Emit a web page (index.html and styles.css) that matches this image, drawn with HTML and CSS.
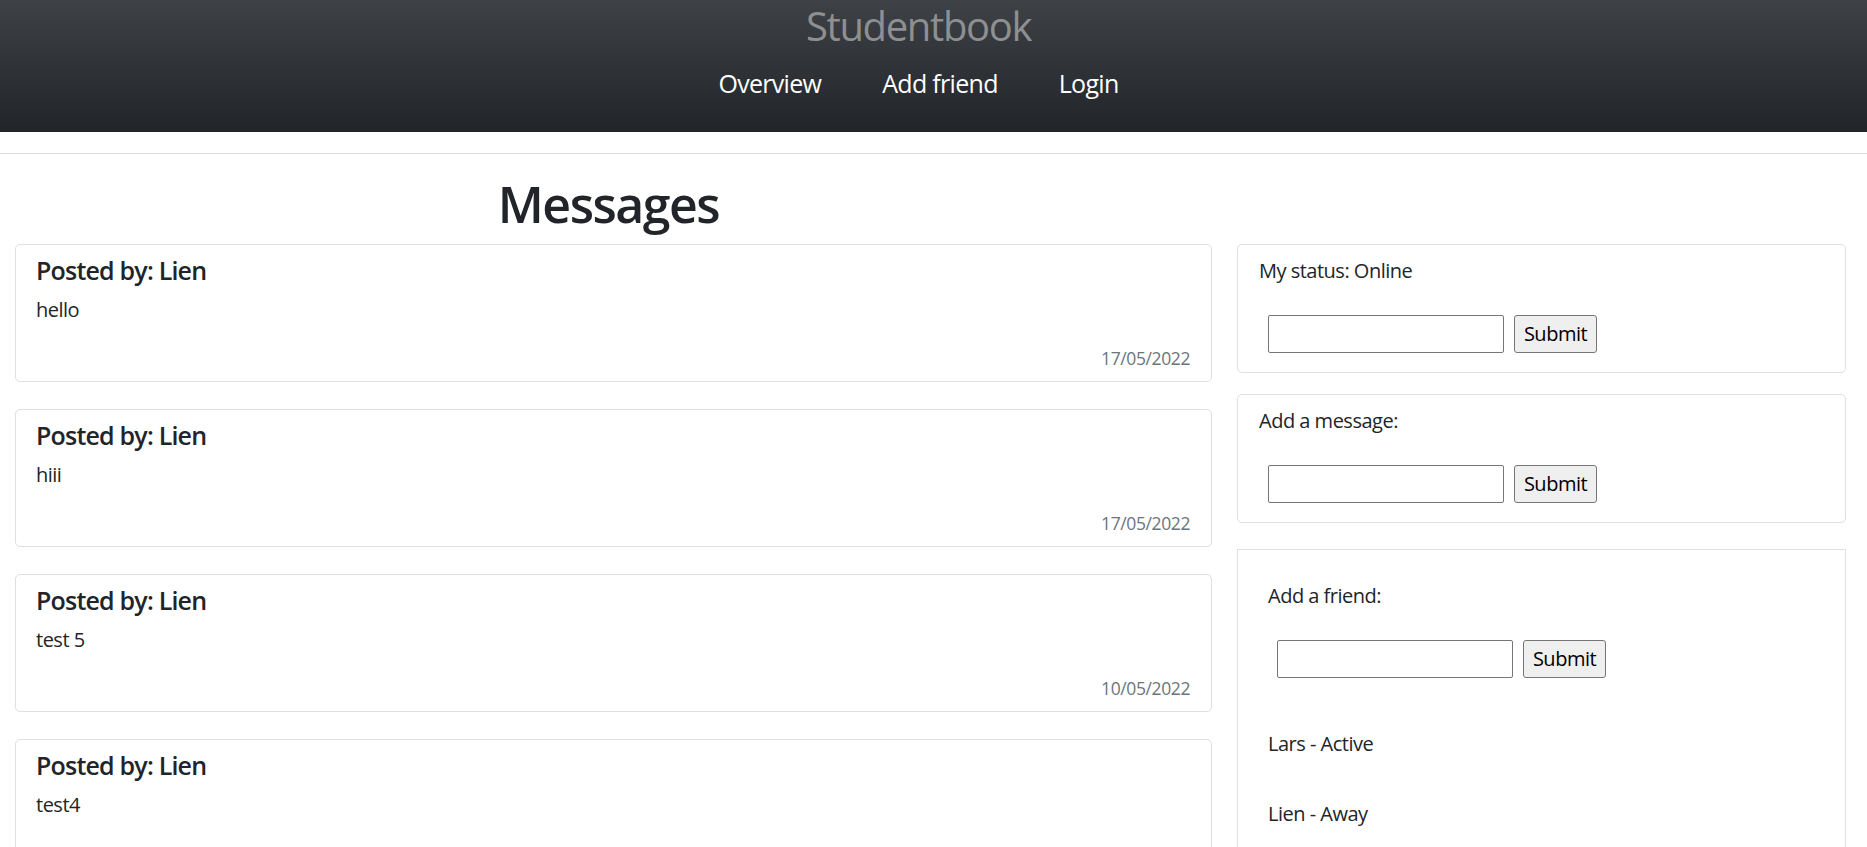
FILE: index.html
```html
<!DOCTYPE html>
<html lang="en">
<head>
<meta charset="utf-8">
<title>Studentbook</title>
<link rel="stylesheet" href="styles.css">
</head>
<body>
<header class="topbar">
  <h1 class="brand">Studentbook</h1>
  <nav class="nav">
    <a href="#">Overview</a>
    <a href="#">Add friend</a>
    <a href="#">Login</a>
  </nav>
</header>
<hr class="divider">
<main class="layout">
  <h2 class="page-title">Messages</h2>
  <span class="title-spacer"></span>
  <section class="messages">
    <article class="card">
      <h3 class="card-title">Posted by: Lien</h3>
      <p class="card-text">hello</p>
      <p class="card-date">17/05/2022</p>
    </article>
    <article class="card">
      <h3 class="card-title">Posted by: Lien</h3>
      <p class="card-text">hiii</p>
      <p class="card-date">17/05/2022</p>
    </article>
    <article class="card">
      <h3 class="card-title">Posted by: Lien</h3>
      <p class="card-text">test 5</p>
      <p class="card-date">10/05/2022</p>
    </article>
    <article class="card">
      <h3 class="card-title">Posted by: Lien</h3>
      <p class="card-text">test4</p>
      <p class="card-date">10/05/2022</p>
    </article>
  </section>
  <aside class="side">
    <div class="panel">
      <p class="panel-label">My status: Online</p>
      <form class="inline-form">
        <input class="field" type="text">
        <button class="btn" type="button">Submit</button>
      </form>
    </div>
    <div class="panel">
      <p class="panel-label">Add a message:</p>
      <form class="inline-form">
        <input class="field" type="text">
        <button class="btn" type="button">Submit</button>
      </form>
    </div>
    <div class="panel panel-friends">
      <div class="friends-inner">
        <p class="panel-label">Add a friend:</p>
        <form class="inline-form">
          <input class="field" type="text">
          <button class="btn" type="button">Submit</button>
        </form>
        <ul class="friend-list">
          <li>Lars - Active</li>
          <li>Lien - Away</li>
        </ul>
      </div>
    </div>
  </aside>
</main>
</body>
</html>
```

FILE: styles.css
```css
html {
  overflow: hidden;
}
body {
  margin: 0;
  font-family: "Open Sans", "Noto Sans", sans-serif;
  font-size: 20px;
  line-height: 30px;
  letter-spacing: -0.5px;
  color: #212529;
  background: #fff;
}

.topbar {
  height: 132px;
  box-sizing: border-box;
  padding-right: 30px;
  background: linear-gradient(180deg, #3e4145 0%, #212428 100%);
  display: flex;
  flex-direction: column;
  align-items: center;
}
.brand {
  margin: 2px 0 0;
  font-size: 40px;
  line-height: 48px;
  font-weight: 400;
  letter-spacing: -1.35px;
  color: #8e8f90;
}
.nav {
  display: flex;
  gap: 61px;
  margin-top: 18px;
}
.nav a {
  font-size: 25px;
  line-height: 30px;
  letter-spacing: -0.7px;
  color: #fff;
  text-decoration: none;
}

.divider {
  margin: 21px 0 0;
  border: 0;
  border-top: 1px solid #dedede;
  height: 0;
}

.layout {
  display: grid;
  grid-template-columns: 1197fr 609fr;
  column-gap: 25px;
  padding: 0 21px 0 15px;
  align-items: start;
}
.page-title {
  margin: 20px 0 10px;
  padding-right: 10px;
  font-size: 50px;
  line-height: 60px;
  font-weight: 600;
  letter-spacing: -1.5px;
  text-align: center;
}

.messages {
  display: flex;
  flex-direction: column;
  gap: 27px;
}
.card {
  border: 1px solid #dfdfdf;
  border-radius: 5px;
  padding: 10px 21px 10px 20px;
}
.card-title {
  margin: 0 0 10px;
  font-size: 25px;
  line-height: 30px;
  font-weight: 600;
  letter-spacing: -0.8px;
}
.card-text {
  margin: 0 0 20px;
}
.card-date {
  margin: 0;
  font-size: 17.5px;
  line-height: 26px;
  letter-spacing: -0.4px;
  color: #6c757d;
  text-align: right;
}

.side {
  display: flex;
  flex-direction: column;
  gap: 21px;
}
.panel {
  border: 1px solid #dfdfdf;
  border-radius: 5px;
  padding: 11px 20px 19px 21px;
}
.panel-label {
  margin: 0 0 29px;
}
.inline-form {
  display: flex;
  align-items: center;
  gap: 10px;
  margin: 0 0 0 9px;
}
.field {
  width: 236px;
  height: 38px;
  box-sizing: border-box;
  border: 1px solid #767676;
  border-radius: 2px;
  background: #fff;
  margin: 0;
  padding: 0 4px;
  font: inherit;
}
.btn {
  height: 38px;
  width: 83px;
  box-sizing: border-box;
  border: 1px solid #767676;
  border-radius: 3px;
  background: #efefef;
  color: #000;
  font-family: inherit;
  font-size: 20px;
  line-height: 26px;
  letter-spacing: -0.5px;
  padding: 0;
  margin: 0;
}

.panel-friends {
  border-radius: 0;
  margin-top: 5px;
  padding: 31px 30px 40px;
  min-height: 400px;
}
.friend-list {
  list-style: none;
  margin: 51px 0 0;
  padding: 0;
  display: flex;
  flex-direction: column;
  gap: 40px;
}
```
